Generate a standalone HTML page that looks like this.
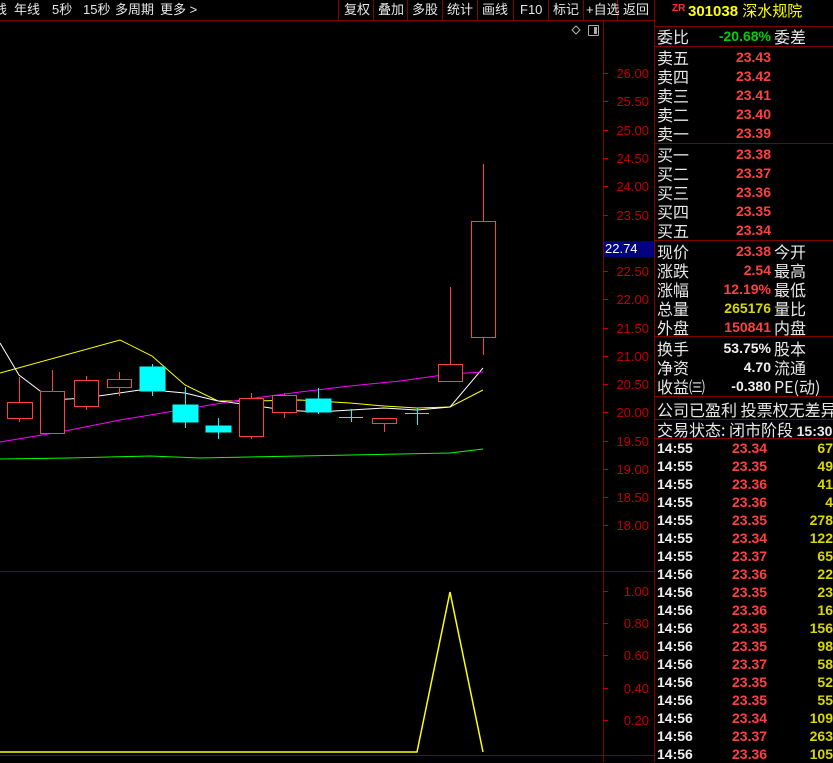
<!DOCTYPE html>
<html><head><meta charset="utf-8"><style>
body{margin:0;width:833px;height:762px;background:#000;overflow:hidden;position:relative;font-family:"Liberation Sans","Noto Sans CJK SC",sans-serif;}
.t{position:absolute;white-space:nowrap;}
.cn{font-family:"Noto Sans CJK SC","WenQuanYi Zen Hei",sans-serif;font-size:16px;color:#e8e8e8;line-height:19px;}
.n{font-family:"Liberation Sans",sans-serif;font-weight:bold;font-size:14px;line-height:19px;text-align:right;}
.r{color:#ff4040}.y{color:#d8d800}.g{color:#00d000}.w{color:#f0f0f0}
.top{font-size:13px;color:#e8e8e8;line-height:20px;top:0;font-family:"Liberation Sans","Noto Sans CJK SC",sans-serif;}
.ax{position:absolute;font-family:"Liberation Sans",sans-serif;font-size:13px;color:#c00000;right:184px;text-align:right;}
</style></head><body>
<svg width="833" height="762" style="position:absolute;left:0;top:0" shape-rendering="crispEdges">
<g stroke="#800000" stroke-width="1" fill="none">
<line x1="0" y1="20.5" x2="654" y2="20.5"/>
<line x1="603.5" y1="21" x2="603.5" y2="762"/>
<line x1="654.5" y1="0" x2="654.5" y2="762"/>
<line x1="0" y1="571.5" x2="654" y2="571.5"/>
<line x1="0" y1="755.5" x2="654" y2="755.5"/>
<line x1="338.5" y1="0" x2="338.5" y2="20"/><line x1="373.5" y1="0" x2="373.5" y2="20"/><line x1="407.5" y1="0" x2="407.5" y2="20"/><line x1="442.5" y1="0" x2="442.5" y2="20"/><line x1="477.5" y1="0" x2="477.5" y2="20"/><line x1="513.5" y1="0" x2="513.5" y2="20"/><line x1="548.5" y1="0" x2="548.5" y2="20"/><line x1="583.5" y1="0" x2="583.5" y2="20"/><line x1="617.5" y1="0" x2="617.5" y2="20"/>
<line x1="654" y1="26.5" x2="833" y2="26.5"/><line x1="654" y1="46.5" x2="833" y2="46.5"/><line x1="654" y1="143.5" x2="833" y2="143.5"/><line x1="654" y1="240.5" x2="833" y2="240.5"/><line x1="654" y1="336.5" x2="833" y2="336.5"/><line x1="654" y1="396.5" x2="833" y2="396.5"/><line x1="654" y1="419.5" x2="833" y2="419.5"/><line x1="654" y1="438.5" x2="833" y2="438.5"/>
</g>
<g stroke="#c00000">
<line x1="603" y1="73.5" x2="608" y2="73.5"/><line x1="603" y1="101.5" x2="608" y2="101.5"/><line x1="603" y1="130.5" x2="608" y2="130.5"/><line x1="603" y1="158.5" x2="608" y2="158.5"/><line x1="603" y1="186.5" x2="608" y2="186.5"/><line x1="603" y1="215.5" x2="608" y2="215.5"/><line x1="603" y1="271.5" x2="608" y2="271.5"/><line x1="603" y1="299.5" x2="608" y2="299.5"/><line x1="603" y1="328.5" x2="608" y2="328.5"/><line x1="603" y1="356.5" x2="608" y2="356.5"/><line x1="603" y1="384.5" x2="608" y2="384.5"/><line x1="603" y1="412.5" x2="608" y2="412.5"/><line x1="603" y1="441.5" x2="608" y2="441.5"/><line x1="603" y1="469.5" x2="608" y2="469.5"/><line x1="603" y1="497.5" x2="608" y2="497.5"/><line x1="603" y1="525.5" x2="608" y2="525.5"/>
<line x1="603" y1="591.5" x2="608" y2="591.5"/><line x1="603" y1="623.5" x2="608" y2="623.5"/><line x1="603" y1="655.5" x2="608" y2="655.5"/><line x1="603" y1="688.5" x2="608" y2="688.5"/><line x1="603" y1="720.5" x2="608" y2="720.5"/>
</g>
<rect x="604" y="241" width="50" height="16" fill="#000080"/>
<polygon points="576,26 580,30 576,34 572,30" fill="none" stroke="#aaa"/>
<rect x="588.5" y="25.5" width="10" height="10" rx="1" fill="none" stroke="#aaa"/><rect x="594" y="27" width="3" height="7" fill="#aaa"/>
<g fill="none" stroke-width="1" shape-rendering="auto">
<polyline stroke="#ffff00" points="0,373 120,340 152,356 185,385 218,401 251,401 300,400 350,403 384,406 417,408 450,407 483,390"/>
<polyline stroke="#ffffff" points="0,343 19,375 52,400 85,398 140,390 152,390 185,393 218,401 251,405 284,410 318,412 351,410 384,408 417,410 450,407 483,368"/>
<polyline stroke="#ff00ff" points="0,442 60,432 120,420 180,410 240,400 300,392 350,386 400,381 450,374 483,372"/>
<polyline stroke="#00ff00" points="0,459 70,458 150,456 200,458 300,456 400,454 450,453 483,449"/>
<polyline stroke="#ffff00" stroke-width="1.5" points="0,752 417,752 450,592 483,752"/>
</g>
<g stroke="#ff4040" fill="none">
<line x1="19.5" y1="377" x2="19.5" y2="422"/><rect x="7.5" y="402.5" width="25" height="16" fill="#000"/>
<line x1="52.5" y1="370" x2="52.5" y2="434"/><rect x="40.5" y="391.5" width="24" height="42" fill="#000"/>
<line x1="86.5" y1="376" x2="86.5" y2="410"/><rect x="74.5" y="380.5" width="24" height="26" fill="#000"/>
<line x1="119.5" y1="372" x2="119.5" y2="396"/><rect x="107.5" y="379.5" width="24" height="8" fill="#000"/>
<line x1="251.5" y1="393" x2="251.5" y2="439"/><rect x="239.5" y="398.5" width="24" height="38" fill="#000"/>
<line x1="284.5" y1="393" x2="284.5" y2="418"/><rect x="272.5" y="395.5" width="24" height="17" fill="#000"/>
<line x1="384.5" y1="418" x2="384.5" y2="432"/><rect x="372.5" y="418.5" width="24" height="5" fill="#000"/>
<line x1="450.5" y1="287" x2="450.5" y2="364"/><rect x="438.5" y="364.5" width="24" height="17" fill="#000"/>
<line x1="483.5" y1="164" x2="483.5" y2="355"/><rect x="471.5" y="221.5" width="24" height="116" fill="#000"/>
</g>
<g stroke="#00ffff" fill="#00ffff">
<line x1="152.5" y1="364" x2="152.5" y2="396"/><rect x="140" y="367" width="25" height="24"/>
<line x1="185.5" y1="387" x2="185.5" y2="428"/><rect x="173" y="405" width="25" height="17"/>
<line x1="218.5" y1="418" x2="218.5" y2="439"/><rect x="206" y="426" width="25" height="6"/>
<line x1="318.5" y1="388" x2="318.5" y2="414"/><rect x="306" y="399" width="25" height="13"/>
<line x1="351.5" y1="409" x2="351.5" y2="422"/><line x1="339" y1="417.5" x2="363" y2="417.5"/>
<line x1="417.5" y1="408" x2="417.5" y2="425"/><line x1="405" y1="413.5" x2="429" y2="413.5"/>
</g>
</svg>
<div class="t top" style="left:-6px">线</div><div class="t top" style="left:14px">年线</div><div class="t top" style="left:52px">5秒</div><div class="t top" style="left:83px">15秒</div><div class="t top" style="left:115px">多周期</div><div class="t top" style="left:160px">更多 &gt;</div>
<div class="t top" style="left:344px">复权</div><div class="t top" style="left:378px">叠加</div><div class="t top" style="left:412px">多股</div><div class="t top" style="left:447px">统计</div><div class="t top" style="left:482px">画线</div><div class="t top" style="left:520px">F10</div><div class="t top" style="left:553px">标记</div><div class="t top" style="left:586px">+自选</div><div class="t top" style="left:623px">返回</div>
<div class="t" style="left:672px;top:3px;font-size:10px;color:#ff3030;font-weight:bold">ZR</div>
<div class="t" style="left:688px;top:2px;font-size:15px;color:#ffff00;font-family:'Liberation Sans','Noto Sans CJK SC',sans-serif;font-weight:bold;line-height:20px">301038 <span style="font-weight:normal">深水规院</span></div>
<div class="ax" style="top:66px">26.00</div><div class="ax" style="top:94px">25.50</div><div class="ax" style="top:123px">25.00</div><div class="ax" style="top:151px">24.50</div><div class="ax" style="top:179px">24.00</div><div class="ax" style="top:208px">23.50</div><div class="ax" style="top:264px">22.50</div><div class="ax" style="top:292px">22.00</div><div class="ax" style="top:321px">21.50</div><div class="ax" style="top:349px">21.00</div><div class="ax" style="top:377px">20.50</div><div class="ax" style="top:405px">20.00</div><div class="ax" style="top:434px">19.50</div><div class="ax" style="top:462px">19.00</div><div class="ax" style="top:490px">18.50</div><div class="ax" style="top:518px">18.00</div>
<div class="ax" style="top:584px">1.00</div><div class="ax" style="top:616px">0.80</div><div class="ax" style="top:648px">0.60</div><div class="ax" style="top:681px">0.40</div><div class="ax" style="top:713px">0.20</div>
<div class="t" style="left:605px;top:241px;font-size:13px;color:#fff;line-height:16px">22.74</div>
<div style="position:absolute;left:657px;top:27px;width:176px">
<div style="position:relative;height:19px"><span class="t cn" style="left:0">委比</span><span class="t n g" style="right:62px">-20.68%</span><span class="t cn" style="left:117px">委差</span></div>
</div>
<div style="position:absolute;left:657px;top:48px;width:176px">
<div style="position:relative;height:19px"><span class="t cn">卖五</span><span class="t n r" style="right:62px">23.43</span></div>
<div style="position:relative;height:19px"><span class="t cn">卖四</span><span class="t n r" style="right:62px">23.42</span></div>
<div style="position:relative;height:19px"><span class="t cn">卖三</span><span class="t n r" style="right:62px">23.41</span></div>
<div style="position:relative;height:19px"><span class="t cn">卖二</span><span class="t n r" style="right:62px">23.40</span></div>
<div style="position:relative;height:19px"><span class="t cn">卖一</span><span class="t n r" style="right:62px">23.39</span></div>
<div style="position:relative;height:19px;margin-top:2px"><span class="t cn">买一</span><span class="t n r" style="right:62px">23.38</span></div>
<div style="position:relative;height:19px"><span class="t cn">买二</span><span class="t n r" style="right:62px">23.37</span></div>
<div style="position:relative;height:19px"><span class="t cn">买三</span><span class="t n r" style="right:62px">23.36</span></div>
<div style="position:relative;height:19px"><span class="t cn">买四</span><span class="t n r" style="right:62px">23.35</span></div>
<div style="position:relative;height:19px"><span class="t cn">买五</span><span class="t n r" style="right:62px">23.34</span></div>
<div style="position:relative;height:19px;margin-top:2px"><span class="t cn">现价</span><span class="t n r" style="right:62px">23.38</span><span class="t cn" style="left:117px">今开</span></div>
<div style="position:relative;height:19px"><span class="t cn">涨跌</span><span class="t n r" style="right:62px">2.54</span><span class="t cn" style="left:117px">最高</span></div>
<div style="position:relative;height:19px"><span class="t cn">涨幅</span><span class="t n r" style="right:62px">12.19%</span><span class="t cn" style="left:117px">最低</span></div>
<div style="position:relative;height:19px"><span class="t cn">总量</span><span class="t n y" style="right:62px">265176</span><span class="t cn" style="left:117px">量比</span></div>
<div style="position:relative;height:19px"><span class="t cn">外盘</span><span class="t n r" style="right:62px">150841</span><span class="t cn" style="left:117px">内盘</span></div>
<div style="position:relative;height:19px;margin-top:2px"><span class="t cn">换手</span><span class="t n w" style="right:62px">53.75%</span><span class="t cn" style="left:117px">股本</span></div>
<div style="position:relative;height:19px"><span class="t cn">净资</span><span class="t n w" style="right:62px">4.70</span><span class="t cn" style="left:117px">流通</span></div>
<div style="position:relative;height:19px"><span class="t cn">收益㈢</span><span class="t n w" style="right:62px">-0.380</span><span class="t cn" style="left:117px">PE(动)</span></div>
<div style="position:relative;height:22px;margin-top:2px"><span class="t cn" style="top:2px">公司已盈利 投票权无差异</span></div>
<div style="position:relative;height:19px"><span class="t cn">交易状态: 闭市阶段 <b style="font-family:'Liberation Sans';font-size:14px">15:30</b></span></div>
</div>
<div style="position:absolute;left:657px;top:439px;width:176px;font-family:'Liberation Sans',sans-serif;font-weight:bold;font-size:14px;line-height:18px">
<div style="position:relative;height:18px"><span class="t w">14:55</span><span class="t r" style="left:75px">23.34</span><span class="t y" style="right:0">67</span></div>
<div style="position:relative;height:18px"><span class="t w">14:55</span><span class="t r" style="left:75px">23.35</span><span class="t y" style="right:0">49</span></div>
<div style="position:relative;height:18px"><span class="t w">14:55</span><span class="t r" style="left:75px">23.36</span><span class="t y" style="right:0">41</span></div>
<div style="position:relative;height:18px"><span class="t w">14:55</span><span class="t r" style="left:75px">23.36</span><span class="t y" style="right:0">4</span></div>
<div style="position:relative;height:18px"><span class="t w">14:55</span><span class="t r" style="left:75px">23.35</span><span class="t y" style="right:0">278</span></div>
<div style="position:relative;height:18px"><span class="t w">14:55</span><span class="t r" style="left:75px">23.34</span><span class="t y" style="right:0">122</span></div>
<div style="position:relative;height:18px"><span class="t w">14:55</span><span class="t r" style="left:75px">23.37</span><span class="t y" style="right:0">65</span></div>
<div style="position:relative;height:18px"><span class="t w">14:56</span><span class="t r" style="left:75px">23.36</span><span class="t y" style="right:0">22</span></div>
<div style="position:relative;height:18px"><span class="t w">14:56</span><span class="t r" style="left:75px">23.35</span><span class="t y" style="right:0">23</span></div>
<div style="position:relative;height:18px"><span class="t w">14:56</span><span class="t r" style="left:75px">23.36</span><span class="t y" style="right:0">16</span></div>
<div style="position:relative;height:18px"><span class="t w">14:56</span><span class="t r" style="left:75px">23.35</span><span class="t y" style="right:0">156</span></div>
<div style="position:relative;height:18px"><span class="t w">14:56</span><span class="t r" style="left:75px">23.35</span><span class="t y" style="right:0">98</span></div>
<div style="position:relative;height:18px"><span class="t w">14:56</span><span class="t r" style="left:75px">23.37</span><span class="t y" style="right:0">58</span></div>
<div style="position:relative;height:18px"><span class="t w">14:56</span><span class="t r" style="left:75px">23.35</span><span class="t y" style="right:0">52</span></div>
<div style="position:relative;height:18px"><span class="t w">14:56</span><span class="t r" style="left:75px">23.35</span><span class="t y" style="right:0">55</span></div>
<div style="position:relative;height:18px"><span class="t w">14:56</span><span class="t r" style="left:75px">23.34</span><span class="t y" style="right:0">109</span></div>
<div style="position:relative;height:18px"><span class="t w">14:56</span><span class="t r" style="left:75px">23.37</span><span class="t y" style="right:0">263</span></div>
<div style="position:relative;height:18px"><span class="t w">14:56</span><span class="t r" style="left:75px">23.36</span><span class="t y" style="right:0">105</span></div>
</div>
</body></html>
